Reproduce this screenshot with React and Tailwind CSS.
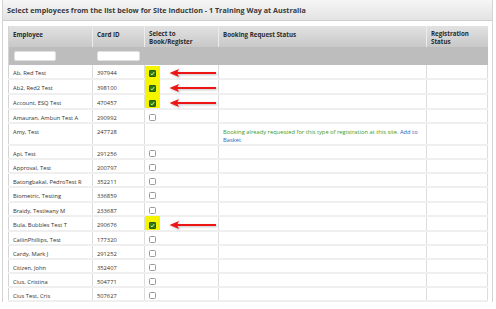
import React from "react";

const rows = [
  { name: "Ab, Red Test", card: "397944", box: "checked", mark: "top" },
  { name: "Ab2, Red2 Test", card: "398100", box: "checked", mark: "mid" },
  { name: "Account, ESQ Test", card: "470457", box: "checked", mark: "bottom" },
  { name: "Amauran, Ambun Test A", card: "290992", box: "empty" },
  { name: "Amy, Test", card: "247728", box: "none", booked: true },
  { name: "Api, Test", card: "291256", box: "empty" },
  { name: "Approval, Test", card: "200797", box: "empty" },
  { name: "Batongbakal, PedroTest R", card: "352211", box: "empty" },
  { name: "Biometric, Testing", card: "336859", box: "empty" },
  { name: "Braidy, Testleany M", card: "233687", box: "empty" },
  { name: "Bula, Bubbles Test T", card: "290676", box: "checked", mark: "single" },
  { name: "CailinPhillips, Test", card: "177320", box: "empty" },
  { name: "Cardy, Mark J", card: "291252", box: "empty" },
  { name: "Citizen, John", card: "352407", box: "empty" },
  { name: "Cius, Cristina", card: "504771", box: "empty" },
  { name: "Cius Test, Cris", card: "507627", box: "empty" },
];

const Arrow = () => (
  <svg width="50" height="10" viewBox="0 0 50 10" className="drop-shadow-[1px_1px_1px_rgba(0,0,0,0.25)]">
    <polygon points="0.5,5 10,1 8.5,4 47,4 47,6 8.5,6 10,9" fill="#ee1515" />
  </svg>
);

const Checked = () => (
  <span className="flex h-[7px] w-[7px] items-center justify-center rounded-[1px] border border-[#2a5a10] bg-[#2f7a12]">
    <svg width="5" height="5" viewBox="0 0 5 5">
      <path d="M0.8 2.8 L2 3.9 L4.2 1.1" stroke="#d8f0a0" strokeWidth="1" fill="none" />
    </svg>
  </span>
);

const Empty = () => (
  <span className="block h-[7px] w-[7px] rounded-[1.5px] border border-[#9a9a9a] bg-white" />
);

const App = () => {
  const cell = "border-r border-b-2 border-r-[#dcdcdc] border-b-[#efefef] align-top pt-[4px] pl-[4px] leading-[8px]";
  return (
    <div className="h-[309px] w-[496px] overflow-hidden bg-white font-['Open_Sans',sans-serif] text-[#333]">
      <div className="ml-[2px] w-[491px] border-x border-[#d4d4d4]">
        {/* Title bar */}
        <div className="flex h-[21px] items-center border-b border-[#cfcfcf] bg-gradient-to-b from-[#f6f6f6] to-[#e3e3e3] pl-[4px] text-[7.2px] font-bold text-[#3a3a3a]">
          Select employees from the list below for Site Induction - 1 Training Way at Australia
        </div>

        <div className="pl-[5px] pt-[5px]">
          <table className="w-[479px] table-fixed border-collapse border-l border-[#d4d4d4] text-[5.75px]">
            <colgroup>
              <col className="w-[84px]" />
              <col className="w-[52px]" />
              <col className="w-[74px]" />
              <col className="w-[208px]" />
              <col className="w-[61px]" />
            </colgroup>
            <thead>
              <tr className="h-[21px] bg-gradient-to-b from-[#e2e2e2] to-[#c8c8c8] text-left text-[6.2px] font-bold text-[#2a2a2a]">
                <th className="border-r border-[#ececec] pl-[4px] pt-[5px] align-top leading-[8px]">Employee</th>
                <th className="border-r border-[#ececec] pl-[4px] pt-[5px] align-top leading-[8px]">Card ID</th>
                <th className="border-r border-[#ececec] pl-[4px] pt-[4px] align-top leading-[8px]">
                  Select to<br />Book/Register
                </th>
                <th className="border-r border-[#ececec] pl-[4px] pt-[5px] align-top leading-[8px]">Booking Request Status</th>
                <th className="pl-[4px] pt-[4px] align-top leading-[8px]">
                  Registration<br />Status
                </th>
              </tr>
              <tr className="h-[18px] bg-[#bdbdbd]">
                <td className="pl-[5px]">
                  <div className="h-[10px] w-[42px] rounded-[2px] border border-[#e0e0e0] bg-white" />
                </td>
                <td className="pl-[4px]">
                  <div className="h-[10px] w-[43px] rounded-[2px] border border-[#e0e0e0] bg-white" />
                </td>
                <td />
                <td />
                <td />
              </tr>
            </thead>
            <tbody>
              {rows.map((r) => (
                <tr key={r.name} className={r.booked ? "h-[21px]" : "h-[14.1px]"}>
                  <td className={cell}>{r.name}</td>
                  <td className={cell}>{r.card}</td>
                  <td className={`${cell} relative`}>
                    {r.mark && (
                      <span
                        className={`absolute left-0 w-[15px] bg-[#f5f500] ${
                          r.mark === "top"
                            ? "top-[1px] -bottom-[2px]"
                            : r.mark === "mid"
                            ? "top-0 -bottom-[2px]"
                            : r.mark === "bottom"
                            ? "top-0 bottom-0"
                            : "-top-[1px] bottom-0"
                        }`}
                      />
                    )}
                    <div className="relative flex items-center">
                      {r.box === "checked" && <Checked />}
                      {r.box === "empty" && <Empty />}
                      {r.mark && (
                        <span className="ml-[13px] -mt-[1px]">
                          <Arrow />
                        </span>
                      )}
                    </div>
                  </td>
                  <td className={cell}>
                    {r.booked && (
                      <p className="pr-[2px]">
                        <span className="text-[#3d9a2a]">
                          Booking already requested for this type of registration at this site.
                        </span>{" "}
                        <span className="text-[#2f5fb8]">Add to Basket</span>
                      </p>
                    )}
                  </td>
                  <td className={cell} />
                </tr>
              ))}
            </tbody>
          </table>
        </div>
      </div>
    </div>
  );
};

export default App;
